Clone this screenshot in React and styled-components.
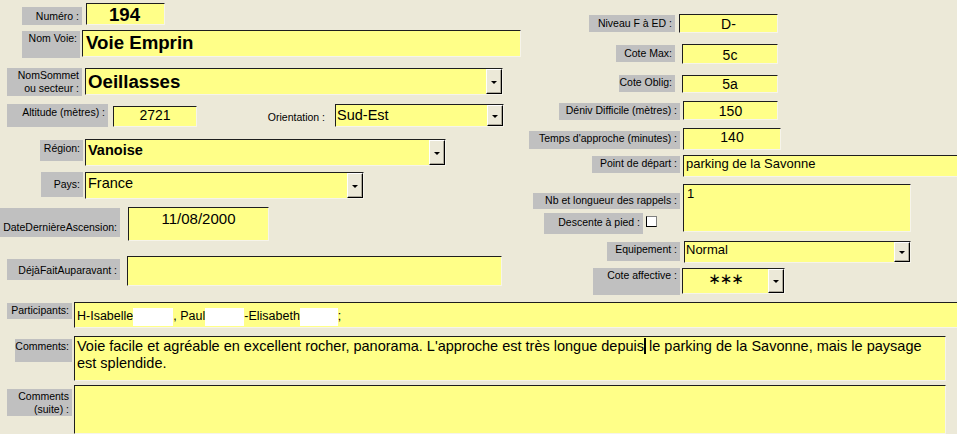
import React from "react";
import styled, { createGlobalStyle, css } from "styled-components";

const Global = createGlobalStyle`
  html, body { margin: 0; padding: 0; background: #ece9d8; }
  body { overflow: hidden; }
  #root { width: 957px; height: 434px; overflow: hidden; }
`;

const YELLOW = "#ffff88";
const GRAY = "#c0c0c0";

const Page = styled.div`
  width: 957px;
  height: 434px;
  background: #ece9d8;
  display: flex;
  flex-direction: column;
  overflow: hidden;
  font-family: "Liberation Sans", Arial, sans-serif;
  color: #000;
`;

const Top = styled.div`
  display: flex;
  height: 302px;
`;

const Column = styled.div`
  display: flex;
  flex-direction: column;
  width: ${(p) => p.$w}px;
  padding-top: ${(p) => p.$pt || 0}px;
  flex: none;
`;

const Bottom = styled.div`
  display: flex;
  flex-direction: column;
`;

const Row = styled.div`
  display: flex;
  align-items: flex-start;
  height: ${(p) => p.$h}px;
  flex: none;
`;

const Stack = styled.div`
  display: flex;
  flex-direction: column;
  width: ${(p) => p.$w}px;
  margin-left: ${(p) => p.$ml || 0}px;
  flex: none;
`;

const Label = styled.div`
  flex: none;
  box-sizing: border-box;
  margin-left: ${(p) => p.$ml || 0}px;
  margin-top: ${(p) => p.$mt || 0}px;
  width: ${(p) => p.$w}px;
  height: ${(p) => (p.$h ? `${p.$h}px` : "auto")};
  padding: ${(p) => p.$pt || 0}px 3px 0 0;
  background: ${(p) => (p.$plain ? "transparent" : GRAY)};
  text-align: right;
  font-family: "Liberation Sans", Arial, sans-serif;
  font-size: 10.5px;
  line-height: 13px;
  white-space: pre-line;
  overflow: hidden;
`;

const Field = styled.div`
  flex: none;
  box-sizing: border-box;
  display: flex;
  align-items: stretch;
  margin-left: ${(p) => p.$ml || 0}px;
  margin-top: ${(p) => p.$mt || 0}px;
  width: ${(p) => p.$w}px;
  height: ${(p) => p.$h}px;
  background: ${YELLOW};
  border-top: 1px solid #1e1e1e;
  border-left: 1px solid #1e1e1e;
  border-right: 1px solid #f6f4ea;
  border-bottom: 1px solid #f6f4ea;
  overflow: hidden;
`;

const Value = styled.div`
  flex: 1;
  min-width: 0;
  box-sizing: border-box;
  padding: ${(p) => p.$pt || 0}px ${(p) => p.$pr || 2}px 0 ${(p) => p.$pl ?? 2}px;
  font-family: "Liberation Sans", Arial, sans-serif;
  font-size: ${(p) => p.$size || 13}px;
  font-weight: ${(p) => (p.$bold ? 700 : 400)};
  line-height: ${(p) => (p.$lh ? `${p.$lh}px` : 1.15)};
  text-align: ${(p) => p.$align || "left"};
  white-space: ${(p) => (p.$wrap ? "normal" : "nowrap")};
  ${(p) =>
    p.$stars &&
    css`
      font-family: "DejaVu Sans", sans-serif;
      letter-spacing: -1px;
    `}
`;

const DropBtn = styled.div`
  flex: none;
  box-sizing: border-box;
  width: 16px;
  background: #ece9d8;
  border-top: 1px solid #ffffff;
  border-left: 1px solid #ffffff;
  border-right: 1px solid #000;
  border-bottom: 1px solid #000;
  box-shadow: inset -1px -1px 0 #aca899;
  display: flex;
  align-items: center;
  justify-content: center;
`;

const Arrow = styled.span`
  width: 0;
  height: 0;
  border-left: 3px solid transparent;
  border-right: 3px solid transparent;
  border-top: 3px solid #000;
  margin-top: 1px;
`;

const Check = styled.div`
  flex: none;
  box-sizing: border-box;
  width: 11px;
  height: 11px;
  margin-left: ${(p) => p.$ml || 0}px;
  margin-top: ${(p) => p.$mt || 0}px;
  background: #fff;
  border-top: 1px solid #808080;
  border-right: 1px solid #808080;
  border-left: 1px solid #000;
  border-bottom: 1px solid #000;
`;

const Redacted = styled.span`
  display: inline-block;
  width: ${(p) => p.$w}px;
  height: 18px;
  background: #fff;
  vertical-align: -6px;
`;

const Caret = styled.span`
  display: inline-block;
  width: 2px;
  height: 16px;
  background: #000;
  vertical-align: -3px;
  margin-right: -1px;
`;

const Drop = () => (
  <DropBtn>
    <Arrow />
  </DropBtn>
);

export default function App() {
  return (
    <>
      <Global />
      <Page>
        <Top>
          <Column $w={522} $pt={3}>
            <Row $h={27}>
              <Label $ml={22} $mt={4} $w={60} $h={18} $pt={3}>Numéro :</Label>
              <Field $ml={4} $w={79} $h={22}>
                <Value $size={18.67} $bold $align="center" $pl={0}>194</Value>
              </Field>
            </Row>
            <Row $h={38}>
              <Label $ml={22} $mt={1} $w={58} $h={27} $pt={1}>Nom Voie:</Label>
              <Field $ml={2} $w={439} $h={27}>
                <Value $size={18.67} $bold $pt={1} $pl={3}>Voie Emprin</Value>
              </Field>
            </Row>
            <Row $h={36}>
              <Label $ml={7} $w={75} $h={28} $pt={1}>{"NomSommet\nou secteur :"}</Label>
              <Field $ml={3} $w={418} $h={27}>
                <Value $size={18.67} $bold $pt={2} $pl={2}>Oeillasses</Value>
                <Drop />
              </Field>
            </Row>
            <Row $h={35}>
              <Label $ml={7} $w={101} $h={23} $pt={2}>Altitude (mètres) :</Label>
              <Field $ml={5} $mt={2} $w={84} $h={21}>
                <Value $size={14} $align="center">2721</Value>
              </Field>
              <Label $plain $ml={70} $mt={7} $w={61}>Orientation :</Label>
              <Field $ml={7} $w={169} $h={23}>
                <Value $size={14.5} $pt={2} $pl={1}>Sud-Est</Value>
                <Drop />
              </Field>
            </Row>
            <Row $h={33}>
              <Label $ml={40} $mt={1} $w={43} $h={21} $pt={2}>Région:</Label>
              <Field $ml={2} $w={361} $h={27}>
                <Value $size={14.5} $bold $pt={2} $pl={2}>Vanoise</Value>
                <Drop />
              </Field>
            </Row>
            <Row $h={35}>
              <Label $ml={41} $w={42} $h={25} $pt={6}>Pays:</Label>
              <Field $ml={2} $w={279} $h={27}>
                <Value $size={14.5} $pt={2} $pl={2}>France</Value>
                <Drop />
              </Field>
            </Row>
            <Row $h={49}>
              <Label $mt={1} $w={120} $h={29} $pt={13}>DateDernièreAscension:</Label>
              <Field $ml={8} $w={141} $h={34}>
                <Value $size={15} $pt={2} $align="center">11/08/2000</Value>
              </Field>
            </Row>
            <Row $h={46}>
              <Label $ml={7} $mt={3} $w={113} $h={21} $pt={5}>DéjàFaitAuparavant :</Label>
              <Field $ml={7} $w={375} $h={30}>
                <Value />
              </Field>
            </Row>
          </Column>

          <Column $w={435} $pt={14}>
            <Row $h={30}>
              <Label $ml={67} $mt={1} $w={86} $h={17} $pt={2}>Niveau F à ED :</Label>
              <Field $ml={4} $w={99} $h={19}>
                <Value $size={14} $pt={1} $align="center">D-</Value>
              </Field>
            </Row>
            <Row $h={30}>
              <Label $ml={94} $mt={1} $w={59} $h={17} $pt={2}>Cote Max:</Label>
              <Field $ml={7} $w={96} $h={20}>
                <Value $size={14} $pt={2} $align="center">5c</Value>
              </Field>
            </Row>
            <Row $h={27}>
              <Label $ml={97} $mt={1} $w={56} $h={17} $pt={1}>Cote Oblig:</Label>
              <Field $ml={7} $mt={1} $w={96} $h={18}>
                <Value $size={14} $pt={0} $align="center">5a</Value>
              </Field>
            </Row>
            <Row $h={27}>
              <Label $ml={37} $mt={2} $w={121} $h={17} $pt={1}>Déniv Difficile (mètres) :</Label>
              <Field $ml={3} $w={95} $h={19}>
                <Value $size={14} $pt={1} $align="center">150</Value>
              </Field>
            </Row>
            <Row $h={27}>
              <Label $ml={7} $mt={3} $w={151} $h={18} $pt={1}>Temps d'approche (minutes) :</Label>
              <Field $ml={3} $w={98} $h={22}>
                <Value $size={14} $pt={0} $align="center">140</Value>
              </Field>
            </Row>
            <Row $h={29}>
              <Label $ml={70} $mt={1} $w={88} $h={17} $pt={1}>Point de départ :</Label>
              <Field $ml={3} $w={280} $h={22}>
                <Value $size={13} $pt={1} $pl={2}>parking de la Savonne</Value>
              </Field>
            </Row>
            <Row $h={57}>
              <Stack $ml={11} $w={147}>
                <Label $mt={9} $w={147} $h={16} $pt={1}>Nb et longueur des rappels :</Label>
                <Row $h={25}>
                  <Label $ml={11} $mt={4} $w={99} $h={21} $pt={3}>Descente à pied :</Label>
                  <Check $ml={3} $mt={7} />
                </Row>
              </Stack>
              <Field $ml={3} $w={228} $h={48}>
                <Value $size={13} $pt={2} $pl={3}>1</Value>
              </Field>
            </Row>
            <Row $h={26}>
              <Label $ml={85} $mt={1} $w={73} $h={19} $pt={1}>Equipement :</Label>
              <Field $ml={4} $w={227} $h={22}>
                <Value $size={13} $pt={1} $pl={1}>Normal</Value>
                <Drop />
              </Field>
            </Row>
            <Row $h={35}>
              <Label $ml={71} $mt={1} $w={87} $h={27} $pt={1}>Cote affective :</Label>
              <Field $ml={2} $mt={1} $w={103} $h={26}>
                <Value $stars $size={15} $pt={2} $align="center">∗∗∗</Value>
                <Drop />
              </Field>
            </Row>
          </Column>
        </Top>

        <Bottom>
          <Row $h={33}>
            <Label $ml={7} $mt={1} $w={65} $h={16} $pt={1}>Participants:</Label>
            <Field $ml={2} $w={895} $h={26}>
              <Value $size={12.5} $pt={5} $pl={2}>
                H-Isabelle<Redacted $w={40} />, Paul<Redacted $w={39} />-Elisabeth<Redacted $w={38} />;
              </Value>
            </Field>
          </Row>
          <Row $h={49}>
            <Label $ml={15} $mt={4} $w={57} $h={23} $pt={1}>Comments:</Label>
            <Field $ml={2} $mt={1} $w={872} $h={45}>
              <Value $wrap $size={14.5} $lh={17} $pt={1} $pl={2} $pr={18}>
                Voie facile et agréable en excellent rocher, panorama. L'approche est très longue depuis<Caret /> le parking de la Savonne, mais le paysage
                <br />
                est splendide.
              </Value>
            </Field>
          </Row>
          <Row $h={50}>
            <Label $ml={7} $mt={5} $w={65} $h={27} $pt={1}>{"Comments\n(suite) :"}</Label>
            <Field $ml={2} $mt={1} $w={872} $h={49}>
              <Value />
            </Field>
          </Row>
        </Bottom>
      </Page>
    </>
  );
}
